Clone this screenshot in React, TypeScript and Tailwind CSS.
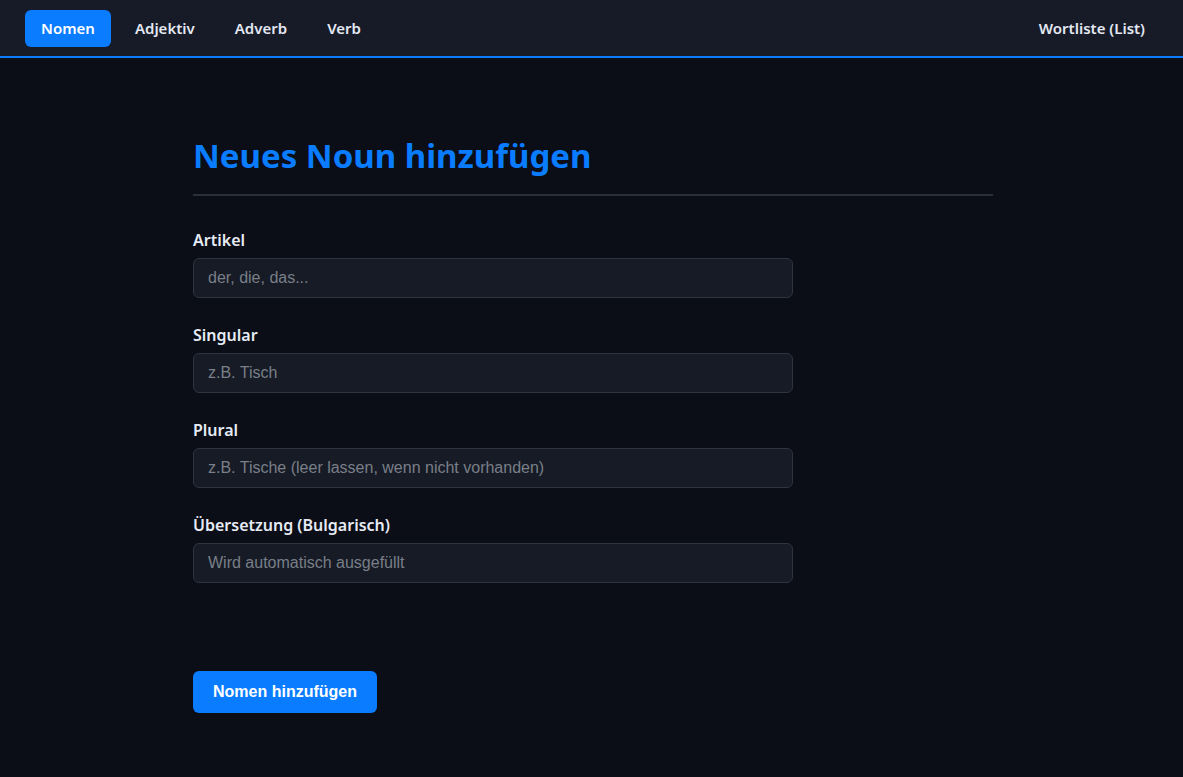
import { useState } from 'react';

const tabs = ['Nomen', 'Adjektiv', 'Adverb', 'Verb'];

const fields = [
	{ label: 'Artikel', placeholder: 'der, die, das...' },
	{ label: 'Singular', placeholder: 'z.B. Tisch' },
	{ label: 'Plural', placeholder: 'z.B. Tische (leer lassen, wenn nicht vorhanden)' },
	{ label: 'Übersetzung (Bulgarisch)', placeholder: 'Wird automatisch ausgefüllt' },
];

function Navbar() {
	const [active, setActive] = useState('Nomen');

	return (
		<nav className="h-[58px] bg-[#161b27] border-b-2 border-[#0a7cff] flex items-center justify-between pl-[25px] pr-[22px]">
			<div className="flex items-center gap-2">
				{tabs.map((tab) => (
					<button
						key={tab}
						onClick={() => setActive(tab)}
						className={
							active === tab
								? 'h-[37px] px-4 rounded-md bg-[#0a7cff] text-white text-[15px] font-semibold'
								: 'h-[37px] px-4 rounded-md text-[#e3e8f2] text-[15px] font-semibold'
						}
					>
						{tab}
					</button>
				))}
			</div>
			<button className="h-[37px] px-4 rounded-md text-[#e3e8f2] text-[15px] font-semibold">Wortliste (List)</button>
		</nav>
	);
}

export default function App() {
	return (
		<div className="min-h-screen bg-[#0b0e16] font-['Segoe_UI','Noto_Sans',sans-serif]">
			<Navbar />

			<main className="w-[800px] mx-[193px] pt-[78px]">
				<h1 className="text-[33px] leading-[40px] font-bold text-[#0a7cff] pb-[18px] border-b-2 border-[#2b303b]">
					Neues Noun hinzufügen
				</h1>

				<form className="pt-[32px] flex flex-col gap-[25px]" onSubmit={(e) => e.preventDefault()}>
					{fields.map((f) => (
						<div key={f.label} className="flex flex-col">
							<label className="text-[16px] leading-6 font-semibold text-[#e6ebf5] mb-[6px]">{f.label}</label>
							<input
								placeholder={f.placeholder}
								className="w-[600px] h-10 px-[14px] rounded-md bg-[#161b26] border border-[#2e3440] text-[16px] text-white placeholder:text-[#7a7f88] font-['Liberation_Sans',Arial,sans-serif] outline-none"
							/>
						</div>
					))}
				</form>

				<button className="mt-[88px] h-[42px] px-5 rounded-md bg-[#0a7cff] text-white text-[16px] font-bold font-['Liberation_Sans',Arial,sans-serif]">
					Nomen hinzufügen
				</button>
			</main>
		</div>
	);
}
